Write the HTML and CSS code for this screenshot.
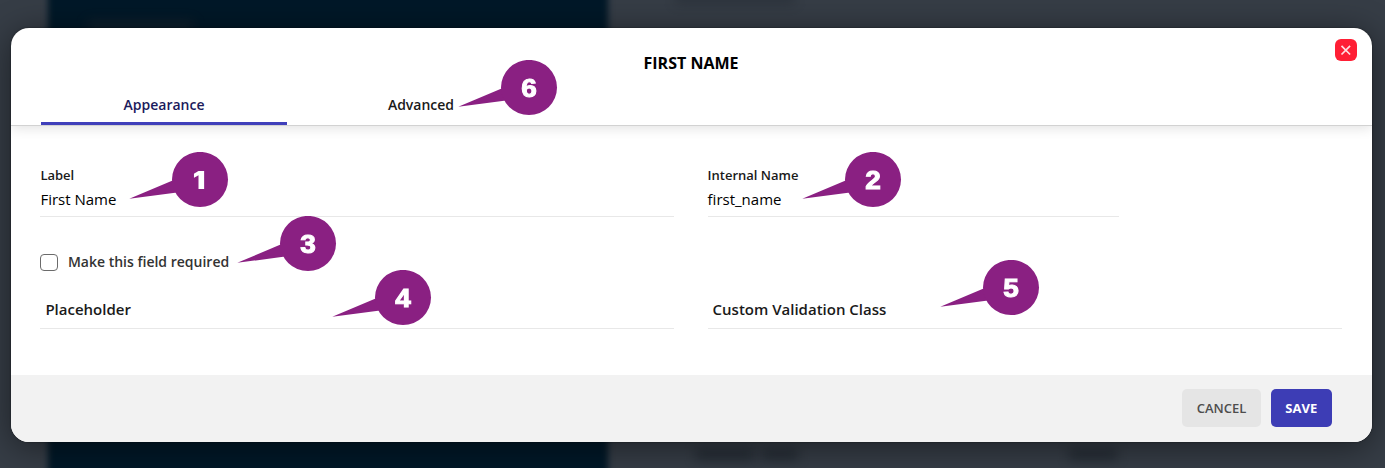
FILE: index.html
```html
<!DOCTYPE html>
<html lang="en">
<head>
    <meta charset="UTF-8">
    <meta name="viewport" content="width=device-width, initial-scale=1.0">
    <title>First Name</title>
    <link rel="stylesheet" href="styles.css">
</head>
<body>
    <!-- Dimmed page behind the modal -->
    <div class="backdrop">
        <div class="backdrop-panel"></div>
        <div class="smudge smudge-left"></div>
        <div class="smudge smudge-top"></div>
        <div class="smudge smudge-name"></div>
        <div class="smudge smudge-name-end"></div>
        <div class="smudge smudge-right"></div>
    </div>

    <div class="modal">
        <div class="modal-header">
            <h2 class="modal-title">FIRST NAME</h2>
            <button class="close-button" aria-label="Close">
                <svg width="12" height="12" viewBox="0 0 12 12">
                    <path d="M1.5 1.9 L10.1 10.5 M10.1 1.9 L1.5 10.5" fill="none" stroke="#ffdfe2" stroke-width="1.7"/>
                </svg>
            </button>
            <div class="tabs">
                <div class="tab active">Appearance</div>
                <div class="tab">Advanced</div>
            </div>
        </div>

        <div class="modal-body">
            <div class="field">
                <span class="field-label">Label</span>
                <span class="field-value">First Name</span>
            </div>
            <div class="field internal-field">
                <span class="field-label">Internal Name</span>
                <span class="field-value">first_name</span>
            </div>
            <div class="required-row">
                <span class="checkbox"></span>
                <span class="required-text">Make this field required</span>
            </div>
            <div class="empty-field">Placeholder</div>
            <div class="empty-field">Custom Validation Class</div>
        </div>

        <div class="modal-footer">
            <button class="cancel-button">CANCEL</button>
            <button class="save-button">SAVE</button>
        </div>
    </div>

    <!-- Numbered callouts -->
    <svg width="0" height="0" class="defs">
        <symbol id="pin" viewBox="0 0 100 56">
            <path d="M0.3 46.8 L46 27.5 L48 40.6 Z"/>
            <ellipse cx="71" cy="27.5" rx="28" ry="27.6"/>
        </symbol>
    </svg>
    <div class="callout callout-1"><svg><use href="#pin"/></svg><span>1</span></div>
    <div class="callout callout-2"><svg><use href="#pin"/></svg><span>2</span></div>
    <div class="callout callout-3"><svg><use href="#pin"/></svg><span>3</span></div>
    <div class="callout callout-4"><svg><use href="#pin"/></svg><span>4</span></div>
    <div class="callout callout-5"><svg><use href="#pin"/></svg><span>5</span></div>
    <div class="callout callout-6"><svg><use href="#pin"/></svg><span>6</span></div>
</body>
</html>
```
FILE: styles.css
```css
* {
    box-sizing: border-box;
}

body {
    margin: 0;
    height: 468px;
    padding: 28px 13.5px 26px 10.5px;
    overflow: hidden;
    position: relative;
    font-family: "Open Sans", "Noto Sans", sans-serif;
    color: #1a1a1a;
}

/* Page behind the modal */
.backdrop {
    position: absolute;
    inset: 0;
    overflow: hidden;
    background-color: #363d46;
}

.backdrop-panel {
    position: absolute;
    top: -20px;
    bottom: -20px;
    left: 48px;
    width: 560px;
    background-color: #011828;
    filter: blur(3px);
}

.smudge {
    position: absolute;
    height: 11px;
    filter: blur(6px);
    opacity: 0.7;
    background-color: #1c232c;
}

.smudge-left {
    top: 21px;
    left: 88px;
    width: 105px;
    background-color: #18242f;
}

.smudge-top {
    top: -7px;
    left: 675px;
    width: 120px;
    opacity: 0.4;
}

.smudge-name {
    top: 449px;
    left: 696px;
    width: 58px;
}

.smudge-name-end {
    top: 449px;
    left: 762px;
    width: 36px;
}

.smudge-right {
    top: 449px;
    left: 1069px;
    width: 48px;
}

.modal {
    position: relative;
    height: 414px;
    display: flex;
    flex-direction: column;
    border-radius: 18px;
    overflow: hidden;
    background-color: #fff;
    box-shadow: 0 5px 34px rgba(0, 0, 0, 0.48), 0 0 2px rgba(0, 0, 0, 0.5);
}

.modal-header {
    position: relative;
    height: 98px;
    flex-shrink: 0;
    display: flex;
    flex-direction: column;
    justify-content: space-between;
    border-bottom: 1px solid #d2d2d2;
    box-shadow: 0 2px 12px rgba(0, 0, 0, 0.12);
}

.modal-title {
    margin: 24px 0 0;
    font-size: 16px;
    line-height: 22px;
    font-weight: 700;
    text-align: center;
    color: #000;
}

.close-button {
    position: absolute;
    top: 11px;
    right: 14.8px;
    width: 22px;
    height: 22px;
    padding: 0;
    display: flex;
    align-items: center;
    justify-content: center;
    border: none;
    border-radius: 6px;
    background-color: #ff1f35;
}

.tabs {
    display: flex;
    gap: 11px;
    padding-left: 30.5px;
}

.tab {
    width: 246px;
    height: 33px;
    padding-top: 3px;
    font-size: 14px;
    line-height: 20px;
    font-weight: 600;
    text-align: center;
    border-bottom: 3px solid transparent;
}

.tab.active {
    color: #1b1b5c;
    border-bottom-color: #3f3fba;
}

.modal-body {
    flex: 1;
    display: grid;
    grid-template-columns: 634px 634px;
    grid-template-rows: 52px 74px 38px;
    column-gap: 33.2px;
    padding: 39px 29px 0 29.9px;
}

.field {
    display: flex;
    flex-direction: column;
    border-bottom: 1px solid #e8e8e8;
}

.internal-field {
    width: 411px;
}

.field-label {
    font-size: 13px;
    line-height: 20px;
    font-weight: 600;
}

.field-value {
    padding-top: 4px;
    font-size: 15px;
    line-height: 21px;
    color: #000;
}

.required-row {
    grid-column: 1 / 3;
    display: flex;
    align-items: center;
    gap: 10px;
    padding-top: 17px;
}

.checkbox {
    width: 17.5px;
    height: 17px;
    border: 1px solid #6b6b6b;
    border-radius: 4px;
}

.required-text {
    padding-bottom: 2px;
    font-size: 14px;
    font-weight: 600;
    color: #333;
}

.empty-field {
    padding: 8px 5px 0;
    font-size: 15px;
    line-height: 20px;
    font-weight: 600;
    border-bottom: 1px solid #e8e8e8;
}

.modal-footer {
    height: 67px;
    display: flex;
    justify-content: flex-end;
    align-items: flex-start;
    gap: 10px;
    padding: 14px 40px 0 0;
    background-color: #f2f2f2;
}

.modal-footer button {
    height: 38px;
    padding: 0;
    border: none;
    border-radius: 5px;
    font-family: inherit;
    font-size: 13px;
}

.modal-footer .cancel-button {
    width: 79px;
    font-weight: 600;
    color: #4d4d4d;
    background-color: #e5e5e5;
}

.modal-footer .save-button {
    width: 60.5px;
    font-weight: 700;
    color: #fff;
    background-color: #3d3db5;
}

/* Callouts lie over the form */
.defs {
    position: absolute;
}

.callout {
    position: absolute;
    width: 100px;
    height: 56px;
}

.callout svg {
    display: block;
    width: 100px;
    height: 56px;
    fill: #8a2082;
}

.callout span {
    position: absolute;
    top: 0;
    left: 43px;
    width: 56px;
    line-height: 56px;
    text-align: center;
    font-family: "Liberation Sans", sans-serif;
    font-size: 25px;
    font-weight: 700;
    color: #fff;
    -webkit-text-stroke: 1px #fff;
    transform: scaleX(1.12);
}

.callout-1 {
    top: 152px;
    left: 129px;
}

/* a 1 without a foot */
.callout-1 span {
    left: 42px;
    font-family: Inter, sans-serif;
    font-weight: 900;
    -webkit-text-stroke: 0;
}

.callout-2 {
    top: 152px;
    left: 802px;
}

.callout-3 {
    top: 216px;
    left: 237px;
}

.callout-4 {
    top: 270px;
    left: 332px;
}

.callout-5 {
    top: 260px;
    left: 940px;
}

.callout-6 {
    top: 60px;
    left: 458px;
}
```
